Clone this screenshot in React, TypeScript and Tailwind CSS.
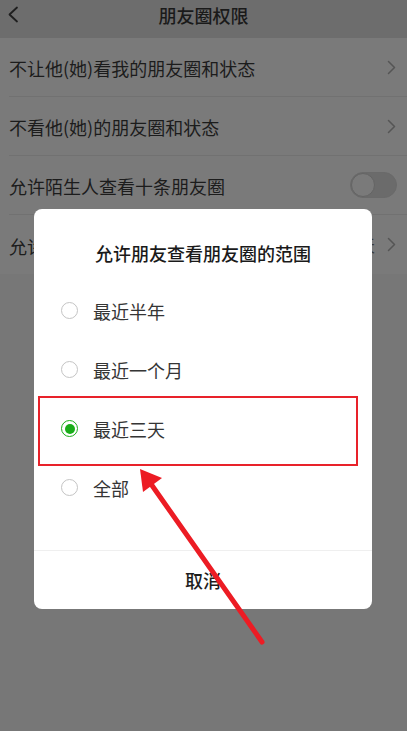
import React from "react";

const rows = [
  { label: "不让他(她)看我的朋友圈和状态", kind: "link" },
  { label: "不看他(她)的朋友圈和状态", kind: "link" },
  { label: "允许陌生人查看十条朋友圈", kind: "switch" },
  { label: "允许朋友查看朋友圈的范围", kind: "link", value: "最近三天" },
];

const options = ["最近半年", "最近一个月", "最近三天", "全部"];

function Chevron() {
  return (
    <svg width="9" height="15" viewBox="0 0 9 15" fill="none">
      <path d="M1.5 1.5 L7.5 7.5 L1.5 13.5" stroke="#555" strokeWidth="1.5" strokeLinecap="round" strokeLinejoin="round" />
    </svg>
  );
}

function Radio({ checked }: { checked: boolean }) {
  if (checked) {
    return (
      <span className="flex h-[17px] w-[17px] items-center justify-center rounded-full border-[1.5px] border-[#1aad19]">
        <span className="h-[10px] w-[10px] rounded-full bg-[#1aad19]" />
      </span>
    );
  }
  return <span className="h-[17px] w-[17px] rounded-full border-[1.5px] border-[#c4c4c4]" />;
}

export default function App() {
  const selected = 2;

  return (
    <div
      className="relative flex h-[731px] w-full flex-col overflow-hidden bg-[#777777]"
      style={{ fontFamily: '"Noto Sans CJK SC", "Noto Sans", sans-serif' }}
    >
      {/* header */}
      <div className="relative flex h-[38px] items-start justify-center bg-[#6d6d6d] pt-[3px]">
        <svg className="absolute left-[7px] top-[6px]" width="12" height="17" viewBox="0 0 12 17" fill="none">
          <path d="M10 1.5 L2.5 8.5 L10 15.5" stroke="#1e1e1e" strokeWidth="1.8" strokeLinecap="round" strokeLinejoin="round" />
        </svg>
        <span className="text-[18px] font-medium leading-[24px] text-[#1a1a1a]">朋友圈权限</span>
      </div>

      {/* settings list */}
      <div className="bg-[#7a7a7a]">
        {rows.map((r, i) => (
          <div
            key={r.label}
            className={
              "ml-[9px] flex h-[59px] items-center pr-[11px] " +
              (i < rows.length - 1 ? "border-b border-[#717171]" : "")
            }
          >
            <span className="flex-1 pt-[2px] text-[18px] leading-[24px] text-[#1c1c1c]">{r.label}</span>
            {r.value && <span className="mr-[12px] text-[17px] text-[#3a3a3a]">{r.value}</span>}
            {r.kind === "link" ? (
              <Chevron />
            ) : (
              <span className="-mr-[1px] flex h-[26px] w-[47px] items-center rounded-full border border-[#6a6a6a] bg-[#6b6b6b]">
                <span className="h-[24px] w-[24px] rounded-full border border-[#646464] bg-[#7a7a7a]" />
              </span>
            )}
          </div>
        ))}
      </div>
      <div className="flex-1" />

      {/* dialog */}
      <div className="absolute left-[34px] top-[209px] flex h-[400px] w-[338px] flex-col rounded-[8px] bg-white">
        <div className="pt-[32px] text-center text-[18px] font-medium leading-[24px] text-[#1a1a1a]">
          允许朋友查看朋友圈的范围
        </div>
        <div className="mt-[16px]">
          {options.map((o, i) => (
            <div key={o} className="flex h-[59px] items-center gap-[15px] pl-[27px]">
              <Radio checked={i === selected} />
              <span className="text-[18px] leading-[24px] text-[#353535]">{o}</span>
            </div>
          ))}
        </div>
        <div className="flex-1" />
        <div className="flex h-[59px] items-center justify-center border-t border-[#efefef] text-[18px] font-medium text-[#1e1e1e]">
          取消
        </div>
      </div>

      {/* annotation: highlight box */}
      <div className="absolute left-[38px] top-[396px] h-[70px] w-[320px] border-2 border-[#e8222a]" />

      {/* annotation: arrow */}
      <svg className="pointer-events-none absolute left-0 top-0" width="407" height="731" viewBox="0 0 407 731">
        <line x1="151" y1="484" x2="262" y2="642" stroke="#ec1c24" strokeWidth="5" strokeLinecap="round" />
        <polygon points="140,469 143,492 162,478" fill="#ec1c24" />
      </svg>
    </div>
  );
}
